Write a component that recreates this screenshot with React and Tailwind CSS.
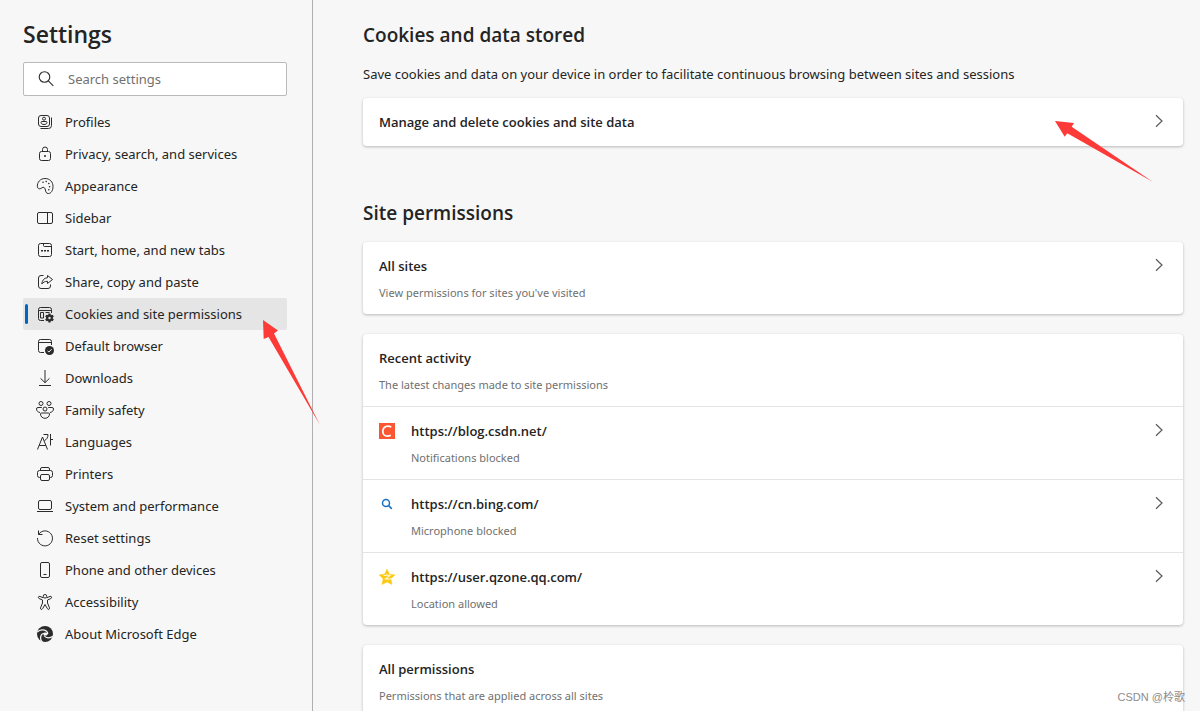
const INK = '#2b2b2b'

const ICONS = {
  profiles: (
    <>
      <rect x="3.5" y="3.5" width="11" height="11" rx="2.5" />
      <path d="M16.5 5.5v8a3 3 0 0 1-3 3h-8" />
      <circle cx="9" cy="6.7" r="1.5" />
      <path d="M6 10.5a1 1 0 0 1 1-1h4a1 1 0 0 1 1 1c0 1.2-1.3 2-3 2s-3-.8-3-2z" />
    </>
  ),
  privacy: (
    <>
      <rect x="4.5" y="7.5" width="11" height="9" rx="2" />
      <path d="M7.5 7.5v-2a2.5 2.5 0 0 1 5 0v2" />
      <circle cx="10" cy="12" r=".6" fill={INK} />
    </>
  ),
  appearance: (
    <>
      <path d="M2.4 10.8C1.9 6.2 5.4 2.5 10 2.5c4.8 0 8 3.4 8 8 0 4-1.9 7-4.6 7-2.3 0-2.7-1.7-3-3.5-.3-1.7-1-2.9-2.4-2.7-.8.1-1.3.8-2.1 1.2-1.6.8-3.2.1-3.5-1.7z" />
      <g fill={INK} stroke="none">
        <circle cx="8" cy="6.3" r=".8" />
        <circle cx="11.2" cy="5.5" r=".8" />
        <circle cx="13.8" cy="7.5" r=".8" />
        <circle cx="14.6" cy="10.7" r=".8" />
        <circle cx="13.8" cy="13.7" r=".8" />
      </g>
    </>
  ),
  sidebar: (
    <>
      <rect x="2.5" y="4.5" width="15" height="11" rx="1.5" />
      <path d="M12.5 4.5v11" />
    </>
  ),
  start: (
    <>
      <rect x="3.5" y="3.5" width="13" height="13" rx="2" />
      <path d="M8.5 3.5v2a1 1 0 0 0 1 1h7" />
      <g fill={INK} stroke="none">
        <rect x="6" y="10" width="2" height="1.5" />
        <rect x="9" y="10" width="2" height="1.5" />
        <rect x="12" y="10" width="2" height="1.5" />
      </g>
    </>
  ),
  share: (
    <>
      <path d="M8.5 3.5H6A2.5 2.5 0 0 0 3.5 6v8A2.5 2.5 0 0 0 6 16.5h7a2.5 2.5 0 0 0 2.5-2.5v-1.5" />
      <path d="M12.5 3.5l5 4-5 4V9.3c-2.6 0-4.3.9-5.7 2.7.2-3.5 2.2-6 5.7-6.3z" />
    </>
  ),
  cookies: (
    <>
      <path d="M9 16.5H5.5a2 2 0 0 1-2-2v-9a2 2 0 0 1 2-2h9a2 2 0 0 1 2 2V9M3.5 6.5h13" />
      <path d="M5.5 8.5h3v5.500h-3zM10.5 8.5h4" />
      <path d="M14.500 9.500v9M10.700 11.800l7.600 4.400M10.700 16.200l7.600-4.400" strokeWidth="2.200" />
      <circle cx="14.500" cy="14" r="3.400" fill={INK} stroke="none" />
      <circle cx="14.500" cy="14" r="1.200" fill="#e5e5e5" stroke="none" />
    </>
  ),
  browser: (
    <>
      <path d="M9 16.5H5.5a2 2 0 0 1-2-2v-9a2 2 0 0 1 2-2h9a2 2 0 0 1 2 2V9M3.5 6.5h13" />
      <circle cx="14.5" cy="14.5" r="4.5" fill={INK} stroke="none" />
      <path d="M12.5 14.7l1.400 1.400 2.800-3" stroke="#f7f7f7" />
    </>
  ),
  downloads: <path d="M4 17.5h12M10 2v12.500M5.500 10.300l4.500 4.400 4.500-4.400" />,
  family: (
    <>
      <circle cx="6" cy="3.5" r="2" />
      <circle cx="14" cy="3.5" r="2" />
      <circle cx="10" cy="9" r="2" />
      <path d="M6.8 7.5H3a1.5 1.5 0 0 0-1.5 1.5c0 1.9 1.5 3.300 3.500 3.500M13.200 7.500H17A1.500 1.500 0 0 1 18.500 9c0 1.900-1.500 3.300-3.500 3.500" />
      <path d="M5.5 14a1 1 0 0 1 1-1h7a1 1 0 0 1 1 1c0 2.500-2 4.300-4.500 4.300S5.500 16.500 5.500 14z" />
    </>
  ),
  languages: (
    <>
      <path d="M2.5 17.5l5-12.500 5 12.500M4.200 13.500h6.600" />
      <path d="M8.500 2.500h4.500c0 3-1.200 5-3.500 6M15.500 2v11.500M15.500 7.500h2.500" />
    </>
  ),
  printers: (
    <>
      <path d="M5.5 13.500h-1a2 2 0 0 1-2-2v-3a2 2 0 0 1 2-2h11a2 2 0 0 1 2 2v3a2 2 0 0 1-2 2h-1" />
      <path d="M5.5 6.500V5A1.500 1.500 0 0 1 7 3.500h6A1.500 1.500 0 0 1 14.500 5v1.500" />
      <rect x="5.5" y="10.5" width="9" height="6" rx="1.5" />
    </>
  ),
  system: (
    <>
      <rect x="3.5" y="4.5" width="13" height="9" rx="1.5" />
      <path d="M2 15.5h16" />
    </>
  ),
  reset: <path d="M3.5 2.500v4h4M3.700 6.300A7.500 7.500 0 1 1 2.500 10" />,
  phone: (
    <>
      <rect x="5.5" y="2.5" width="9" height="15" rx="1.5" />
      <path d="M8.5 14.5h3" />
    </>
  ),
  accessibility: (
    <>
      <circle cx="10" cy="4.300" r="1.800" />
      <path d="M8.200 5.800L5 4.400c-1.700-.6-2.400 1.400-.9 2.100L7.500 8v3l-2 4.800c-.5 1.600 1.400 2.300 2.100.9L10 12.500l2.400 4.200c.7 1.400 2.600.7 2.100-.9l-2-4.800V8l3.400-1.500c1.500-.7.8-2.700-.9-2.100l-3.200 1.400" />
    </>
  ),
  about: (
    <>
      <circle cx="10" cy="10" r="8" fill={INK} stroke="none" />
      <g stroke="#f7f7f7" strokeWidth="1.300">
        <path d="M2.300 8C5 5.500 9 5.300 11.500 7.300c1 .9 1.300 1.700 1.200 2.700" />
        <path d="M7.500 18.300C4.700 15.700 5 11.500 7.700 9.500" />
        <path d="M17.800 12.300c-3 2.500-7 2-8.800-.8" />
      </g>
      <path d="M7.700 9.600c1.500-1.600 4.300-1.400 5 .4-.3 1.300-1.500 1.700-2.700 1.500-1-.1-1.500-.8-2.300-1.900z" fill="#f7f7f7" stroke="none" />
    </>
  ),
}

const NAV = [
  { icon: 'profiles', label: 'Profiles' },
  { icon: 'privacy', label: 'Privacy, search, and services' },
  { icon: 'appearance', label: 'Appearance' },
  { icon: 'sidebar', label: 'Sidebar' },
  { icon: 'start', label: 'Start, home, and new tabs' },
  { icon: 'share', label: 'Share, copy and paste' },
  { icon: 'cookies', label: 'Cookies and site permissions', active: true },
  { icon: 'browser', label: 'Default browser' },
  { icon: 'downloads', label: 'Downloads' },
  { icon: 'family', label: 'Family safety' },
  { icon: 'languages', label: 'Languages' },
  { icon: 'printers', label: 'Printers' },
  { icon: 'system', label: 'System and performance' },
  { icon: 'reset', label: 'Reset settings' },
  { icon: 'phone', label: 'Phone and other devices' },
  { icon: 'accessibility', label: 'Accessibility' },
  { icon: 'about', label: 'About Microsoft Edge' },
]

const ACTIVITY = [
  { site: 'https://blog.csdn.net/', note: 'Notifications blocked', icon: <CsdnIcon /> },
  { site: 'https://cn.bing.com/', note: 'Microphone blocked', icon: <BingIcon /> },
  { site: 'https://user.qzone.qq.com/', note: 'Location allowed', icon: <QzoneIcon /> },
]

function CsdnIcon() {
  return (
    <svg viewBox="0 0 16 16" className="size-4" fill="none" aria-hidden="true">
      <rect width="16" height="16" fill="#fc5531" />
      <path d="M12.3 4.200C9 2 4 3.200 3.800 8.300c-.1 4.700 4.200 5.700 8 4" stroke="#fff" strokeWidth="1.600" />
    </svg>
  )
}

function BingIcon() {
  return (
    <svg viewBox="0 0 16 16" className="size-4" fill="none" stroke="#1a73c7" aria-hidden="true">
      <circle cx="7" cy="7" r="3.500" strokeWidth="1.500" />
      <path d="M9.500 9.500l3.300 3.300" strokeWidth="1.700" />
    </svg>
  )
}

function QzoneIcon() {
  return (
    <svg viewBox="0 0 16 16" className="size-4" aria-hidden="true">
      <path d="M8 .3l2.300 4.900 5.500.7-4 3.800 1.200 5.700L8 12.900l-5 2.500 1.200-5.700-4-3.800 5.500-.7z" fill="#fdc90f" stroke="#fdc90f" strokeLinejoin="round" strokeWidth=".6" />
      <path d="M4.500 6.500c2.200-.5 4.200-.5 6.500-.1L6.500 9.800c2 .4 4 .4 6.500-.3" fill="none" stroke="#fff6d6" strokeWidth="1.200" />
    </svg>
  )
}

function Chevron() {
  return (
    <svg viewBox="0 0 8 14" className="h-3.5 w-2 shrink-0" fill="none" stroke="#5a5a5a" strokeWidth="1.200" aria-hidden="true">
      <path d="M1 1.200l6 5.800-6 5.800" />
    </svg>
  )
}

function NavItem({ icon, label, active }) {
  return (
    <li className="relative">
      <a href="#" aria-current={active ? 'page' : undefined} className={`flex h-8 items-center gap-2.5 rounded-xs pl-3 ${active ? 'bg-[#e5e5e5]' : ''}`}>
        {active && <span className="absolute left-0.5 h-5 w-[3px] rounded-xs bg-[#0067c0]" />}
        <svg viewBox="0 0 20 20" className="size-5 shrink-0" fill="none" stroke={INK} aria-hidden="true">
          {ICONS[icon]}
        </svg>
        <span>{label}</span>
      </a>
      {active && (
        <svg viewBox="0 0 57 105" className="pointer-events-none absolute left-60 top-[22px] z-10 h-[105px] w-[57px]" aria-hidden="true">
          <path d="M0 0l15 10.500-4 3L57 105 5.500 17 .7 19z" fill="#fc3a37" />
        </svg>
      )}
    </li>
  )
}

function Card({ children }) {
  return (
    <div className="relative rounded-[4px] bg-white shadow-[0_1px_3px_rgba(0,0,0,0.26)]">{children}</div>
  )
}

function Heading({ title, note }) {
  return (
    <span className="block flex-1">
      <span className="block font-['Open_Sans',sans-serif] leading-5 font-semibold">{title}</span>
      {note && <span className="mt-2 block text-[11px] leading-[18px] text-[#707070]">{note}</span>}
    </span>
  )
}

function LinkRow({ icon, title, note }) {
  return (
    <button type="button" className={`flex w-full items-start pt-3.5 pr-5 pl-4 text-left ${note ? 'pb-3' : 'pb-3.5'}`}>
      {icon && <span className="mt-0.5 mr-4 shrink-0">{icon}</span>}
      <Heading title={title} note={note} />
      <span className="mt-0.5">
        <Chevron />
      </span>
    </button>
  )
}

export default function App() {
  return (
    <div className="relative flex h-screen overflow-hidden bg-[#f7f7f7] font-['Noto_Sans','Open_Sans',sans-serif] text-[13px] leading-5 text-[#242424]">
      <aside className="w-[313px] shrink-0 border-r border-[#b0b0b0] pt-4 pr-[25px] pl-[23px]">
        <h1 className="font-['Open_Sans',sans-serif] text-[23px] leading-9 font-semibold">Settings</h1>
        <label className="mt-2.5 flex h-[34px] items-center rounded-xs border border-[#bababa] bg-white pl-3">
          <svg viewBox="0 0 20 20" className="size-5 shrink-0" fill="none" stroke={INK} strokeWidth="1.100" aria-hidden="true">
            <circle cx="8.500" cy="8" r="5.300" />
            <path d="M12.300 11.800l5 5" />
          </svg>
          <input type="search" placeholder="Search settings" aria-label="Search settings" className="ml-3 h-5 w-full min-w-0 bg-transparent outline-none placeholder:text-[#717171]" />
        </label>
        <nav className="mt-2.5">
          <ul>
            {NAV.map((item) => (
              <NavItem key={item.icon} {...item} />
            ))}
          </ul>
        </nav>
      </aside>

      <main className="min-w-0 flex-1 pt-5 pr-[17px] pl-[50px]">
        <h2 className="font-['Open_Sans',sans-serif] text-[19px] leading-[30px] font-semibold">Cookies and data stored</h2>
        <p className="mt-3.5">Save cookies and data on your device in order to facilitate continuous browsing between sites and sessions</p>
        <div className="mt-3.5">
          <Card>
            <LinkRow title="Manage and delete cookies and site data" />
            <svg viewBox="0 0 98 61" className="pointer-events-none absolute top-[23px] right-[30px] h-[61px] w-[98px]" aria-hidden="true">
              <path d="M0 0l19 2-2.300 3.700L98 61 12.300 12.300 9.700 15.700z" fill="#fc3a37" />
            </svg>
          </Card>
        </div>

        <h2 className="mt-[52px] font-['Open_Sans',sans-serif] text-[19px] leading-[30px] font-semibold">Site permissions</h2>
        <div className="mt-3.5 flex flex-col gap-5">
          <Card>
            <LinkRow title="All sites" note="View permissions for sites you've visited" />
          </Card>
          <Card>
            <div className="px-4 pt-3.5 pb-3">
              <Heading title="Recent activity" note="The latest changes made to site permissions" />
            </div>
            {ACTIVITY.map((a) => (
              <div key={a.site} className="border-t border-[#e5e5e5]">
                <LinkRow icon={a.icon} title={a.site} note={a.note} />
              </div>
            ))}
          </Card>
          <Card>
            <div className="px-4 pt-3.5 pb-3">
              <Heading title="All permissions" note="Permissions that are applied across all sites" />
            </div>
          </Card>
        </div>
      </main>

      <span className="absolute right-[15px] bottom-1.5 font-['Liberation_Sans','Noto_Sans_CJK_SC',sans-serif] text-[11px] leading-4 text-[#8c8c8c]">CSDN @柃歌</span>
    </div>
  )
}
